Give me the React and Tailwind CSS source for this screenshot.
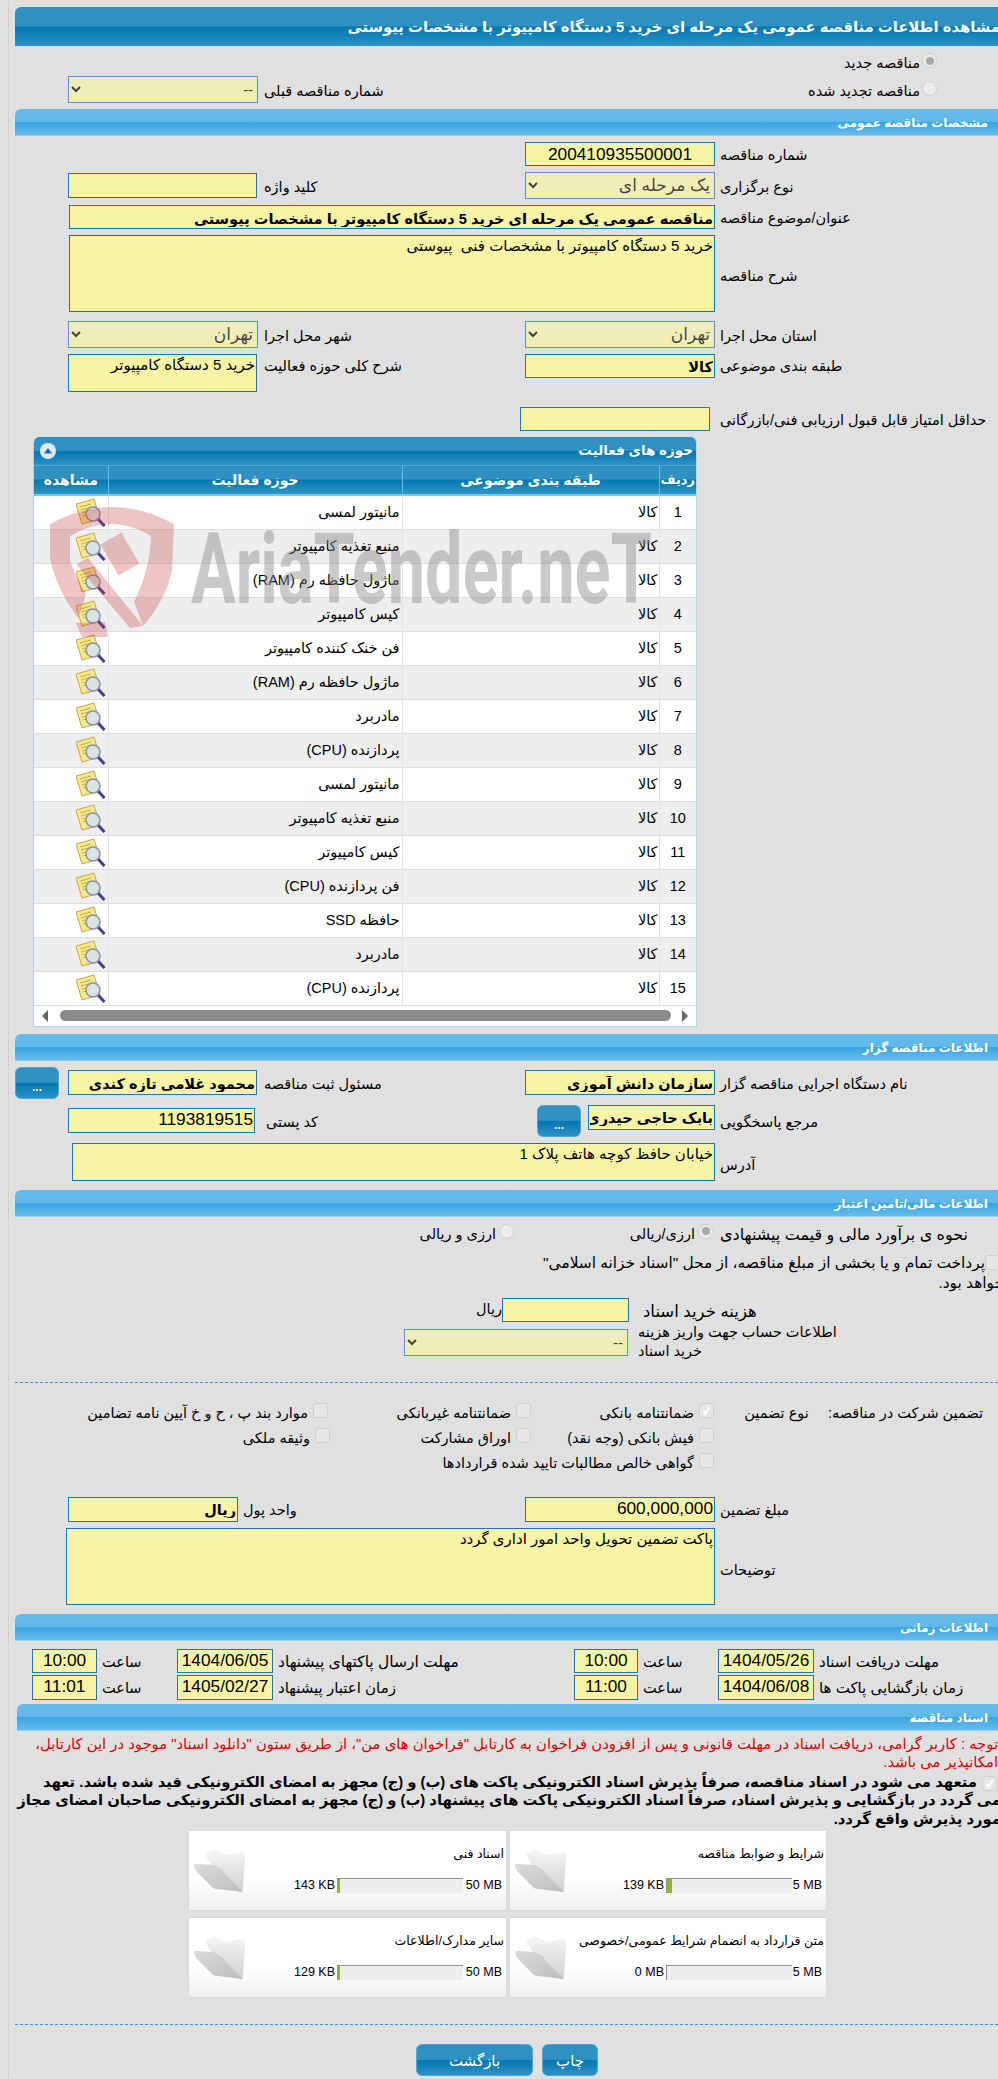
import React from "react";

const field = "block border border-[#1f78ad] bg-[#f7f5a5] text-black px-[1px] outline-none font-['Liberation_Sans','DejaVu_Sans',sans-serif]";
const picker = "block border border-[#1f78ad] bg-[#f7f5a5] text-black opacity-70 outline-none font-['Liberation_Sans','DejaVu_Sans',sans-serif]";
const darkGrad = "bg-[linear-gradient(#2f91c1_0%,#2f91c1_48%,#0477b1_52%,#2d92c6_100%)]";
const rowGrid = "grid grid-cols-[283px_190px_267px_190px_53px]";
const timeGrid = "grid grid-cols-[184px_96px_80px_64px_301px_96px_80px_65px]";

const rows = [
  "مانیتور لمسی",
  "منبع تغذیه کامپیوتر",
  "ماژول حافظه رم (RAM)",
  "کیس کامپیوتر",
  "فن خنک کننده کامپیوتر",
  "ماژول حافظه رم (RAM)",
  "مادربرد",
  "پردازنده (CPU)",
  "مانیتور لمسی",
  "منبع تغذیه کامپیوتر",
  "کیس کامپیوتر",
  "فن پردازنده (CPU)",
  "حافظه SSD",
  "مادربرد",
  "پردازنده (CPU)",
];

const Bar = ({ title, className = "" }) => (
  <div className={`h-[27px] rounded-tl-[6px] border-b border-[#8fd0f2] bg-[linear-gradient(#66bbea_0%,#60b8e9_48%,#3aa5e2_52%,#66bcea_100%)] pr-[10px] text-[12px] leading-[28px] font-bold text-white ${className}`}>
    {title}
  </div>
);

const Label = ({ children, className = "" }) => (
  <div className={`pl-[5px] pt-[2px] text-left leading-[18px] ${className}`}>
    <span className="inline-block">{children}</span>
  </div>
);

const Radio = ({ checked }) => (
  <span className="inline-flex h-[15px] w-[15px] shrink-0 items-center justify-center rounded-full border border-[#cfcfcf] bg-[#ececec]">
    {checked && <span className="h-[8px] w-[8px] rounded-full bg-[#a9a9a9]" />}
  </span>
);

const Check = ({ checked, className = "" }) => (
  <span className={`inline-flex h-[15px] w-[15px] shrink-0 items-center justify-center rounded-[3px] border border-[#d0d0d0] bg-[#e6e6e6] ${className}`}>
    {checked && (
      <svg width="11" height="11" viewBox="0 0 11 11">
        <path d="M2.5 6l2 3L8.5 2" fill="none" stroke="#fff" strokeWidth="2" />
      </svg>
    )}
  </span>
);

const CheckItem = ({ label, checked, className = "" }) => (
  <div className={`flex h-[25px] items-start gap-[5px] leading-[21px] ${className}`}>
    <Check checked={checked} />
    <span>{label}</span>
  </div>
);

const NoteIcon = () => (
  <svg width="30" height="29" viewBox="0 0 30 29" className="block">
    <polygon points="0,6 18,1 24,21 6,26" fill="#f8e88c" stroke="#c7a548" />
    <path d="M4 9l11-3M5 12l11-3M6 15l7-2M7 18l5-1.5" stroke="#c9ab45" strokeWidth="1" />
    <line x1="22" y1="21" x2="28.5" y2="28" stroke="#4b3a9a" strokeWidth="3" />
    <circle cx="17" cy="16" r="7" fill="#d3e2ee" fillOpacity="0.85" stroke="#8a90ae" strokeWidth="1.5" />
  </svg>
);

const Folder = () => (
  <svg width="52" height="46" viewBox="0 0 52 46" className="block shrink-0">
    <defs>
      <linearGradient id="folderBack" x1="0" y1="0" x2="0" y2="1">
        <stop offset="0" stopColor="#f6f6f6" />
        <stop offset="1" stopColor="#d0d0d0" />
      </linearGradient>
      <linearGradient id="folderFront" x1="0" y1="0" x2="1" y2="1">
        <stop offset="0" stopColor="#dcdcdc" />
        <stop offset="1" stopColor="#bdbdbd" />
      </linearGradient>
    </defs>
    <path d="M12 6L20 1L34 7L49 4Q53 5 52 11L50 41Q50 45 46 44L20 20Z" fill="url(#folderBack)" />
    <path d="M1 18Q1 15 5 16L20 17Q28 19 33 27L50 44L24 41Q20 41 17 37L3 23Z" fill="url(#folderFront)" />
  </svg>
);

const DarkBtn = ({ children, className = "" }) => (
  <button className={`rounded-[6px] border border-[#4ea9d8] text-white ${darkGrad} ${className}`}>
    {children}
  </button>
);

const DocCard = ({ title, size, limit, pct, limitClass }) => (
  <div className="flex h-[79px] bg-[linear-gradient(#ffffff_0%,#ffffff_60%,#efefef_100%)] shadow-[0_0_2px_#cfcfcf]">
    <div className="flex-1 pt-[14px] text-[12.5px]">
      <div className="pr-[2px] leading-[18px]">{title}</div>
      <div className="mt-[15px] flex h-[15px] items-center leading-[15px]">
        <span dir="ltr" className={`shrink-0 pr-[4px] text-right ${limitClass}`}>{limit}</span>
        <div className="flex h-[15px] w-[126px] shrink-0 justify-end border-t border-l border-[#8f8f8f] bg-[#eeeeee]">
          <div style={{ width: pct }} className="h-full bg-[#8cb82b]" />
        </div>
        <span dir="ltr" className="pr-[2px]">{size}</span>
      </div>
    </div>
    <div className="w-[56px] pl-[4px] pt-[17px]">
      <Folder />
    </div>
  </div>
);

const Watermark = () => (
  <>
    <svg width="125" height="142" viewBox="0 0 125 142" className="pointer-events-none absolute left-[50px] top-[498px] opacity-30">
      <g fill="#c84040">
        <path d="M0 26Q62 -8 124 26L122 72Q116 102 93 128L84 104Q100 72 101 38Q62 14 20 38L20 62Q26 80 36 96L28 120Q6 90 0 60Z" />
        <path d="M26 66L38 60L93 128L80 130Z" />
        <rect x="58" y="38" width="24" height="36" transform="rotate(-30 70 56)" />
        <path d="M26 125L55 124L58 139L32 139Z" />
      </g>
    </svg>
    <span dir="ltr" className="pointer-events-none absolute left-[191px] top-[521px] origin-left scale-x-[.68] whitespace-nowrap text-[98px] leading-[98px] font-bold text-[#8c8c8c] opacity-45 font-['Roboto',sans-serif]">
      AriaTender.neT
    </span>
  </>
);

const App = () => {
  return (
    <div dir="rtl" className="relative min-h-[2079px] w-[998px] overflow-hidden bg-[#e0e0e0] text-[14.5px] text-black font-['Liberation_Sans','DejaVu_Sans',sans-serif]">
      <div className="ml-[8px] min-h-[2079px] border-l border-dotted border-[#c4c4c4] pl-[6px] pt-[7px]">
        {/* page title */}
        <div className={`-mr-[2px] h-[39px] overflow-hidden rounded-tl-[6px] whitespace-nowrap text-[14.8px] leading-[40px] font-bold text-white ${darkGrad}`}>
          مشاهده اطلاعات مناقصه عمومی یک مرحله ای خرید 5 دستگاه کامپیوتر با مشخصات پیوستی
        </div>

        <div className="mt-[7px] flex h-[23px] items-start gap-[2px] pr-[61px] leading-[20px]">
          <Radio checked />
          <span>مناقصه جدید</span>
        </div>
        <div className={`${rowGrid} h-[27px] items-center`}>
          <div className="flex h-[27px] items-start gap-[2px] pr-[61px] pt-[5px] leading-[20px]">
            <Radio />
            <span>مناقصه تجدید شده</span>
          </div>
          <div />
          <Label className="pl-[6px]">شماره مناقصه قبلی</Label>
          <select disabled className={`${picker} h-[27px] w-[190px] text-[15px]`}>
            <option>--</option>
          </select>
        </div>

        <Bar title="مشخصات مناقصه عمومی" className="mt-[6px]" />

        <div className={`${rowGrid} mt-[6px] items-center`}>
          <Label>شماره مناقصه</Label>
          <input readOnly value="200410935500001" className={`${field} h-[24px] w-[190px] pt-[2px] text-center text-[17.3px]`} />
        </div>
        <div className={`${rowGrid} mt-[6px] h-[27px] items-center`}>
          <Label>نوع برگزاری</Label>
          <select disabled className={`${picker} h-[27px] w-[190px] text-[17px]`}>
            <option>یک مرحله ای</option>
          </select>
          <Label className="pl-[6px]">کلید واژه</Label>
          <input readOnly className={`${field} h-[25px] w-[189px] justify-self-end`} />
        </div>
        <div className={`${rowGrid} mt-[6px] items-center`}>
          <Label>عنوان/موضوع مناقصه</Label>
          <input
            readOnly
            value="مناقصه عمومی یک مرحله ای خرید 5 دستگاه کامپیوتر با مشخصات پیوستی"
            className={`${field} col-span-3 h-[24px] w-[646px] pt-[3px] text-[14.6px] font-bold`}
          />
        </div>
        <div className={`${rowGrid} mt-[6px] items-center`}>
          <Label className="pt-[5px]">شرح مناقصه</Label>
          <textarea
            readOnly
            value="خرید 5 دستگاه کامپیوتر با مشخصات فنی  پیوستی"
            className={`${field} col-span-3 h-[77px] w-[646px] resize-none text-[15px] leading-[20px]`}
          />
        </div>
        <div className={`${rowGrid} mt-[9px] items-center`}>
          <Label>استان محل اجرا</Label>
          <select disabled className={`${picker} h-[27px] w-[190px] text-[17px]`}>
            <option>تهران</option>
          </select>
          <Label className="pl-[6px]">شهر محل اجرا</Label>
          <select disabled className={`${picker} h-[27px] w-[190px] text-[17px]`}>
            <option>تهران</option>
          </select>
        </div>
        <div className={`${rowGrid} mt-[6px] items-start`}>
          <Label className="pt-[3px]">طبقه بندی موضوعی</Label>
          <input readOnly value="کالا" className={`${field} h-[24px] w-[190px] pt-[2px] text-[14.5px] font-bold`} />
          <Label className="pl-[6px] pt-[3px]">شرح کلی حوزه فعالیت</Label>
          <textarea
            readOnly
            value="خرید 5 دستگاه کامپیوتر"
            className={`${field} h-[38px] w-[189px] justify-self-end resize-none text-[15px] leading-[20px]`}
          />
        </div>
        <div className={`${rowGrid} mt-[15px] items-center`}>
          <Label className="whitespace-nowrap">حداقل امتیاز قابل قبول ارزیابی فنی/بازرگانی</Label>
          <input readOnly className={`${field} mr-[5px] h-[24px] w-[190px]`} />
        </div>

        {/* activity table */}
        <div className="mr-[301px] mt-[6px] w-[664px] overflow-hidden rounded-t-[6px] border-x border-b border-[#a9d4ec] bg-white">
          <div className={`flex h-[29px] items-center justify-between border-b border-[#4ea9d8] pl-[6px] pr-[3px] text-[13.5px] font-bold text-white ${darkGrad}`}>
            <span>حوزه های فعالیت</span>
            <span className="flex h-[16px] w-[16px] items-center justify-center rounded-full bg-[#dfe9f2]">
              <svg width="8" height="6" viewBox="0 0 8 6">
                <path d="M4 0L8 5.5H0Z" fill="#1d6f9f" />
              </svg>
            </span>
          </div>
          <table className="w-full table-fixed border-collapse">
            <colgroup>
              <col className="w-[37px]" />
              <col className="w-[257px]" />
              <col className="w-[294px]" />
              <col />
            </colgroup>
            <thead>
              <tr className={`h-[29px] border-b-2 border-[#6fcdf2] text-center text-[14px] font-bold text-white ${darkGrad}`}>
                <th className="border-l border-[#6cb8e0] text-[13px] font-bold whitespace-nowrap">ردیف</th>
                <th className="border-l border-[#6cb8e0] font-bold">طبقه بندی موضوعی</th>
                <th className="border-l border-[#6cb8e0] font-bold">حوزه فعالیت</th>
                <th className="font-bold">مشاهده</th>
              </tr>
            </thead>
            <tbody>
              {rows.map((name, i) => (
                <tr key={i} className={`h-[34px] border-b border-[#dddddd] ${i % 2 === 1 ? "bg-[#eeeeee]" : "bg-white"}`}>
                  <td className="border-l border-[#e4e4e4] pt-[2px] text-center">{i + 1}</td>
                  <td className="border-l border-[#e4e4e4] pr-[1px] pt-[2px]">کالا</td>
                  <td className="border-l border-[#e4e4e4] pr-[2px] pt-[2px]">{name}</td>
                  <td className="pr-[2px]">
                    <NoteIcon />
                  </td>
                </tr>
              ))}
            </tbody>
          </table>
          <div className="flex h-[20px] items-center justify-between bg-white px-[8px]">
            <svg width="8" height="12" viewBox="0 0 8 12">
              <path d="M2 0L8 6L2 12Z" fill="#666" />
            </svg>
            <div className="h-[11px] w-[611px] rounded-full bg-[#8a8a8a]" />
            <svg width="8" height="12" viewBox="0 0 8 12">
              <path d="M6 0L0 6L6 12Z" fill="#666" />
            </svg>
          </div>
        </div>

        <Bar title="اطلاعات مناقصه گزار" className="mt-[7px]" />

        <div className={`${rowGrid} mt-[6px] h-[32px] items-center`}>
          <Label>نام دستگاه اجرایی مناقصه گزار</Label>
          <input readOnly value="سازمان دانش آموزی" className={`${field} h-[25px] w-[190px] pt-[2px] text-[14.5px] font-bold`} />
          <Label className="pl-[6px]">مسئول ثبت مناقصه</Label>
          <input readOnly value="محمود غلامی تازه کندی" className={`${field} h-[25px] w-[189px] justify-self-end pt-[2px] text-[14.5px] font-bold`} />
          <DarkBtn className="h-[32px] w-[44px] justify-self-end pt-[8px] text-[12px] font-bold">...</DarkBtn>
        </div>

        <div className={`${rowGrid} mt-[6px] h-[32px] items-start`}>
          <Label className="pt-[8px]">مرجع پاسخگویی</Label>
          <div className="flex items-start gap-[7px]">
            <input readOnly value="بابک حاجی حیدری" className={`${field} h-[25px] w-[127px] pt-[2px] text-[14.5px] font-bold`} />
            <DarkBtn className="h-[32px] w-[44px] pt-[8px] text-[12px] font-bold">...</DarkBtn>
          </div>
          <Label className="pl-[8px] pt-[8px]">کد پستی</Label>
          <input readOnly value="1193819515" className={`${field} mt-[3px] h-[25px] w-[187px] justify-self-end text-[17.3px]`} />
        </div>

        <div className={`${rowGrid} mt-[6px] items-center`}>
          <Label className="pt-[6px]">آدرس</Label>
          <textarea
            readOnly
            value="خیابان حافظ کوچه هاتف پلاک 1"
            className={`${field} col-span-3 h-[38px] w-[643px] resize-none text-[15px] leading-[20px]`}
          />
        </div>

        <Bar title="اطلاعات مالی/تامین اعتبار" className="mt-[9px]" />

        <div className={`${rowGrid} mt-[7px] h-[20px] items-start`}>
          <Label className="text-[16px]">نحوه ی برآورد مالی و قیمت پیشنهادی</Label>
          <div className="col-span-2 flex items-start leading-[20px]">
            <div className="flex w-[201px] items-start gap-[3px] pr-[2px]">
              <Radio checked />
              <span>ارزی/ریالی</span>
            </div>
            <div className="flex items-start gap-[3px]">
              <Radio />
              <span>ارزی و ریالی</span>
            </div>
          </div>
        </div>

        <div className="-mr-[6px] mt-[9px] h-[44px] leading-[20px] whitespace-nowrap">
          <div className="flex items-center pr-[4px]">
            <Check />
            <span className="text-[15.4px]">پرداخت تمام و یا بخشی از مبلغ مناقصه، از محل "اسناد خزانه اسلامی"</span>
          </div>
          <div className="text-[15.4px]">خواهد بود.</div>
        </div>

        <div className="mt-[1px] flex h-[24px] items-center">
          <Label className="w-[360px] pl-0 text-[16.5px]">هزینه خرید اسناد</Label>
          <input readOnly className={`${field} mr-[9px] h-[24px] w-[127px]`} />
          <span>ریال</span>
        </div>
        <div className="mt-[7px] flex h-[27px] items-center">
          <div className="w-[360px] text-left leading-[19px] whitespace-nowrap">
            اطلاعات حساب جهت واریز هزینه
            <br />
            خرید اسناد
          </div>
          <select disabled className={`${picker} mr-[10px] h-[27px] w-[224px] text-[15px]`}>
            <option>--</option>
          </select>
        </div>

        <div className="mt-[26px] border-t border-dashed border-[#3a95c5]" />

        <div className="mt-[20px] flex">
          <div className="flex w-[284px] gap-[19px] pr-[15px] leading-[21px]">
            <span>تضمین شرکت در مناقصه:</span>
            <span>نوع تضمین</span>
          </div>
          <div className="grid grid-cols-[183px_201px_auto]">
            <CheckItem checked label="ضمانتنامه بانکی" />
            <CheckItem label="ضمانتنامه غیربانکی" />
            <CheckItem className="pr-[2px]" label="موارد بند پ ، ح و خ آیین نامه تضامین" />
            <CheckItem label="فیش بانکی (وجه نقد)" />
            <CheckItem label="اوراق مشارکت" />
            <CheckItem label="وثیقه ملکی" />
            <CheckItem className="col-span-3" label="گواهی خالص مطالبات تایید شده قراردادها" />
          </div>
        </div>

        <div className="mt-[19px] grid grid-cols-[283px_190px_287px_170px] items-center">
          <Label>مبلغ تضمین</Label>
          <input readOnly value="600,000,000" className={`${field} h-[25px] w-[190px] text-[17.3px]`} />
          <Label>واحد پول</Label>
          <input readOnly value="ریال" className={`${field} h-[25px] w-[170px] pt-[2px] text-[14.5px] font-bold`} />
        </div>
        <div className={`${rowGrid} mt-[6px] items-center`}>
          <Label className="pt-[8px]">توضیحات</Label>
          <textarea
            readOnly
            value="پاکت تضمین تحویل واحد امور اداری گردد"
            className={`${field} col-span-3 h-[77px] w-[649px] resize-none text-[15px] leading-[20px]`}
          />
        </div>

        <Bar title="اطلاعات زمانی" className="mt-[9px]" />

        <div className={`${timeGrid} mt-[8px] h-[24px] items-center`}>
          <Label className="pl-[3px] text-[15px] whitespace-nowrap">مهلت دریافت اسناد</Label>
          <input readOnly value="1404/05/26" className={`${field} h-[24px] w-[96px] text-center text-[17.3px]`} />
          <Label className="pl-[2px]">ساعت</Label>
          <input readOnly value="10:00" className={`${field} h-[24px] w-[64px] text-center text-[17.3px]`} />
          <Label className="pl-[2px] text-[15.5px]">مهلت ارسال پاکتهای پیشنهاد</Label>
          <input readOnly value="1404/06/05" className={`${field} h-[24px] w-[96px] text-center text-[17.3px]`} />
          <Label className="pl-[2px]">ساعت</Label>
          <input readOnly value="10:00" className={`${field} h-[24px] w-[65px] text-center text-[17.3px]`} />
        </div>
        <div className={`${timeGrid} mt-[2px] h-[25px] items-center`}>
          <Label className="pl-[3px] text-[15px] whitespace-nowrap">زمان بازگشایی پاکت ها</Label>
          <input readOnly value="1404/06/08" className={`${field} h-[25px] w-[96px] text-center text-[17.3px]`} />
          <Label className="pl-[2px]">ساعت</Label>
          <input readOnly value="11:00" className={`${field} h-[25px] w-[64px] text-center text-[17.3px]`} />
          <Label className="pl-[2px] text-[15px]">زمان اعتبار پیشنهاد</Label>
          <input readOnly value="1405/02/27" className={`${field} h-[25px] w-[96px] text-center text-[17.3px]`} />
          <Label className="pl-[2px]">ساعت</Label>
          <input readOnly value="11:01" className={`${field} h-[25px] w-[65px] text-center text-[17.3px]`} />
        </div>

        <Bar title="اسناد مناقصه" className="ml-[2px] mt-[4px]" />

        <div className="mt-[4px] h-[38px] text-[14.8px] leading-[18.5px] whitespace-nowrap text-[#e00000]">
          توجه : کاربر گرامی، دریافت اسناد در مهلت قانونی و پس از افزودن فراخوان به کارتابل "فراخوان های من"، از طریق ستون "دانلود اسناد" موجود در این کارتابل،
          <br />
          امکانپذیر می باشد.
        </div>
        <div className="-mr-[3px] h-[58px] text-[14.8px] leading-[18.5px] font-bold whitespace-nowrap">
          <Check checked className="mr-[4px] ml-[5px] align-[-2px]" />
          متعهد می شود در اسناد مناقصه، صرفاً پذیرش اسناد الکترونیکی پاکت های (ب) و (ج) مجهز به امضای الکترونیکی قید شده باشد. تعهد
          <br />
          می گردد در بازگشایی و پذیرش اسناد، صرفاً اسناد الکترونیکی پاکت های پیشنهاد (ب) و (ج) مجهز به امضای الکترونیکی صاحبان امضای مجاز
          <br />
          مورد پذیرش واقع گردد.
        </div>

        <div className="mr-[172px] grid w-[637px] grid-cols-[316px_317px] gap-x-[4px] gap-y-[8px]">
          <DocCard title="شرایط و ضوابط مناقصه" size="139 KB" limit="5 MB" pct="4%" limitClass="w-[34px]" />
          <DocCard title="اسناد فنی" size="143 KB" limit="50 MB" pct="2px" limitClass="w-[43px]" />
          <DocCard title="متن قرارداد به انضمام شرایط عمومی/خصوصی" size="0 MB" limit="5 MB" pct="0" limitClass="w-[34px]" />
          <DocCard title="سایر مدارک/اطلاعات" size="129 KB" limit="50 MB" pct="2px" limitClass="w-[43px]" />
        </div>

        <div className="mt-[27px] border-t border-dashed border-[#3a95c5]" />

        <div className="mt-[19px] flex gap-[9px] pr-[400px]">
          <DarkBtn className="h-[32px] w-[56px] pt-[3px] text-[15px]">چاپ</DarkBtn>
          <DarkBtn className="h-[32px] w-[117px] pt-[3px] text-[15px]">بازگشت</DarkBtn>
        </div>
      </div>
      <Watermark />
    </div>
  );
};

export default App;
